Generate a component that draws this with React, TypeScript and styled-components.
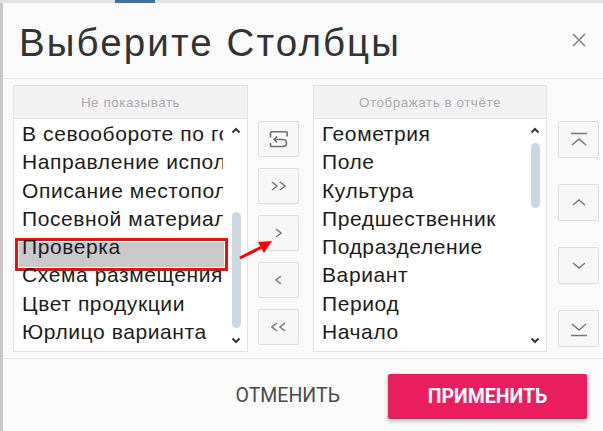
import styled, { createGlobalStyle } from 'styled-components';

const GlobalStyle = createGlobalStyle`
  html, body {
    margin: 0;
    padding: 0;
  }
  body {
    background: #dcdcdc;
    font-family: "Liberation Sans", Arial, sans-serif;
  }
`

const Page = styled.div`
  width: 603px;
  height: 431px;
  display: grid;
  grid-template-columns: 3px 1fr;
  grid-template-rows: 3px 1fr;
  position: relative;
  overflow: hidden;
`

const TopStrip = styled.div`
  grid-column: 1 / 3;
  background: #e2e2e2;
  display: flex;
  padding-left: 115px;
`

const PageTab = styled.div`
  width: 40px;
  background: #3a6ea5;
`

const LeftStrip = styled.div`
  background: #c8c8c8;
`

const Dialog = styled.div`
  background: #fafafa;
  display: flex;
  flex-direction: column;
`

const Header = styled.div`
  height: 76px;
  box-sizing: border-box;
  display: flex;
  align-items: center;
  justify-content: space-between;
  padding: 4px 17px 0 16px;
  border-bottom: 1px solid #e8e8e8;
`

const Title = styled.h1`
  margin: 0;
  font-weight: 400;
  font-size: 38.5px;
  letter-spacing: 2.1px;
  color: #333;
`

const CloseButton = styled.button`
  border: 0;
  background: none;
  padding: 0;
  width: 14px;
  height: 14px;
  display: flex;
  margin-top: -6px;
`

const Body = styled.div`
  height: 280px;
  box-sizing: border-box;
  display: flex;
  align-items: flex-start;
  padding: 6px 0 0 10px;
  border-bottom: 1px solid #e8e8e8;
`

const Panel = styled.div<{ $width: number; $gap: number }>`
  width: ${p => p.$width}px;
  height: 267px;
  box-sizing: border-box;
  margin-right: ${p => p.$gap}px;
  border: 1px solid #e2e2e2;
  background: #fff;
  display: flex;
  flex-direction: column;
`

const PanelHead = styled.div`
  height: 32px;
  flex: none;
  background: #f2f2f2;
  border-bottom: 1px solid #e2e2e2;
  display: flex;
  align-items: center;
  justify-content: center;
  font-size: 13.5px;
  letter-spacing: 0.5px;
  color: #ababab;
`

const PanelBody = styled.div`
  flex: 1;
  display: flex;
  min-height: 0;
`

const List = styled.div`
  flex: 1;
  min-width: 0;
  padding: 1px 2px 0 4px;
`

const Row = styled.div`
  position: relative;
  height: 28.3px;
  line-height: 28.3px;
  font-size: 21px;
  letter-spacing: 0.6px;
  color: #1c1c1c;
`

const Highlight = styled.div`
  position: absolute;
  left: -3px;
  right: -5px;
  top: 5px;
  bottom: -10px;
  background: #c9c9c9;
  border: 3px solid #f20d0d;
  box-shadow: inset 0 0 0 1px #fff;
`

const Label = styled.div`
  position: relative;
  padding-left: 4px;
  white-space: nowrap;
  overflow: hidden;
`

const Track = styled.div<{ $width: number }>`
  width: ${p => p.$width}px;
  flex: none;
  display: flex;
  flex-direction: column;
  align-items: center;
`

const TrackArrow = styled.div`
  height: 22px;
  flex: none;
  display: flex;
  align-items: center;
  justify-content: center;
`

const Rail = styled.div`
  flex: 1;
`

const Thumb = styled.div<{ $top: number; $height: number }>`
  width: 9px;
  margin-top: ${p => p.$top}px;
  height: ${p => p.$height}px;
  border-radius: 5px;
  background: #cdd7e1;
`

const ButtonColumn = styled.div<{ $gap: number; $spread?: boolean }>`
  width: 41px;
  height: 267px;
  box-sizing: border-box;
  margin-right: ${p => p.$gap}px;
  padding: 36px 0 5px;
  display: flex;
  flex-direction: column;
  gap: 11px;
  justify-content: ${p => (p.$spread ? 'space-between' : 'flex-start')};
`

const MoveButton = styled.button<{ $height: number }>`
  width: 41px;
  height: ${p => p.$height}px;
  padding: 0;
  border: 1px solid #dddddd;
  border-radius: 2px;
  background: #f7f7f7;
  display: flex;
  align-items: center;
  justify-content: center;
`

const Footer = styled.div`
  flex: 1;
  display: flex;
  align-items: center;
  justify-content: flex-end;
  padding: 0 16px 0 0;
`

const CancelButton = styled.button`
  border: 0;
  background: none;
  padding: 10px 14px;
  margin-right: 34px;
  font-family: Roboto, "Liberation Sans", sans-serif;
  font-size: 19.5px;
  color: #4a4a4a;
  text-transform: uppercase;
`

const ApplyButton = styled.button`
  width: 199px;
  height: 45px;
  border: 0;
  border-radius: 2px;
  background: #ea1d5f;
  color: #fff;
  font-family: Roboto, "Liberation Sans", sans-serif;
  font-weight: 700;
  font-size: 19.5px;
  text-transform: uppercase;
  box-shadow: 0 2px 4px rgba(0, 0, 0, 0.3);
  margin-top: 2px;
`

const Annotation = styled.svg`
  position: absolute;
  left: 236px;
  top: 234px;
`

const hidden = ['В севообороте по годам', 'Направление использования', 'Описание местоположения', 'Посевной материал', 'Проверка', 'Схема размещения', 'Цвет продукции', 'Юрлицо варианта']
const shown = ['Геометрия', 'Поле', 'Культура', 'Предшественник', 'Подразделение', 'Вариант', 'Период', 'Начало']

function ScrollChevron({ up }: { up?: boolean }) {
  return (
    <svg width="10" height="7" viewBox="0 0 10 7">
      <polyline points={up ? '1.5,5.5 5,2 8.5,5.5' : '1.5,1.5 5,5 8.5,1.5'} fill="none" stroke="#333" strokeWidth="2" />
    </svg>
  )
}

function Chevrons({ dir, count }: { dir: 'left' | 'right' | 'up' | 'down'; count: number }) {
  const one = (x: number) => {
    if (dir === 'right') return `${x},1 ${x + 5},5 ${x},9`
    if (dir === 'left') return `${x + 5},1 ${x},5 ${x + 5},9`
    if (dir === 'up') return `1,${x + 5} 7,${x} 13,${x + 5}`
    return `1,${x} 7,${x + 5} 13,${x}`
  }
  const horizontal = dir === 'left' || dir === 'right'
  const w = horizontal ? 6 + (count - 1) * 8 + 2 : 14
  const h = horizontal ? 10 : 7
  return (
    <svg width={w} height={h} viewBox={`0 0 ${w} ${h}`}>
      {Array.from({ length: count }, (_, i) => (
        <polyline key={i} points={one(horizontal ? 1 + i * 8 : 1)} fill="none" stroke="#777" strokeWidth="1.5" />
      ))}
    </svg>
  )
}

function EdgeIcon({ top }: { top?: boolean }) {
  return (
    <svg width="18" height="16" viewBox="0 0 18 16">
      {top ? (
        <>
          <line x1="1" y1="1.5" x2="17" y2="1.5" stroke="#777" strokeWidth="1.5" />
          <polyline points="2,13 9,7 16,13" fill="none" stroke="#777" strokeWidth="1.5" />
        </>
      ) : (
        <>
          <polyline points="2,3 9,9 16,3" fill="none" stroke="#777" strokeWidth="1.5" />
          <line x1="1" y1="14.5" x2="17" y2="14.5" stroke="#777" strokeWidth="1.5" />
        </>
      )}
    </svg>
  )
}

function ResetIcon() {
  return (
    <svg width="24" height="19" viewBox="0 0 24 19" fill="none" stroke="#6f6f6f" strokeWidth="1.6">
      <path d="M3.5 7.5 V3 Q3.5 1.8 4.7 1.8 H19 Q20.2 1.8 20.2 3 V6.5" />
      <path d="M7 9.5 H15.5 Q19.5 9.5 19.5 13 Q19.5 16.5 15.5 16.5 H4.7 Q3.5 16.5 3.5 15.3 V13" />
      <polyline points="10,6.5 7,9.5 10,12.5" />
    </svg>
  )
}

export default function App() {
  return (
    <>
      <GlobalStyle />
      <Page>
        <TopStrip>
          <PageTab />
        </TopStrip>
        <LeftStrip />
        <Dialog>
          <Header>
            <Title>Выберите Столбцы</Title>
            <CloseButton aria-label="close">
              <svg width="14" height="14" viewBox="0 0 14 14">
                <path d="M1 1 L13 13 M13 1 L1 13" stroke="#808080" strokeWidth="1.5" />
              </svg>
            </CloseButton>
          </Header>
          <Body>
            <Panel $width={235} $gap={10}>
              <PanelHead>Не показывать</PanelHead>
              <PanelBody>
                <List>
                  {hidden.map(name => (
                    <Row key={name}>
                      {name === 'Проверка' && <Highlight />}
                      <Label>{name}</Label>
                    </Row>
                  ))}
                </List>
                <Track $width={22}>
                  <TrackArrow><ScrollChevron up /></TrackArrow>
                  <Rail><Thumb $top={71} $height={116} /></Rail>
                  <TrackArrow><ScrollChevron /></TrackArrow>
                </Track>
              </PanelBody>
            </Panel>
            <ButtonColumn $gap={14}>
              <MoveButton $height={36}><ResetIcon /></MoveButton>
              <MoveButton $height={36}><Chevrons dir="right" count={2} /></MoveButton>
              <MoveButton $height={36}><Chevrons dir="right" count={1} /></MoveButton>
              <MoveButton $height={36}><Chevrons dir="left" count={1} /></MoveButton>
              <MoveButton $height={36}><Chevrons dir="left" count={2} /></MoveButton>
            </ButtonColumn>
            <Panel $width={234} $gap={11}>
              <PanelHead>Отображать в отчёте</PanelHead>
              <PanelBody>
                <List>
                  {shown.map(name => (
                    <Row key={name}><Label>{name}</Label></Row>
                  ))}
                </List>
                <Track $width={22}>
                  <TrackArrow><ScrollChevron up /></TrackArrow>
                  <Rail><Thumb $top={2} $height={65} /></Rail>
                  <TrackArrow><ScrollChevron /></TrackArrow>
                </Track>
              </PanelBody>
            </Panel>
            <ButtonColumn $gap={0} $spread>
              <MoveButton $height={37}><EdgeIcon top /></MoveButton>
              <MoveButton $height={37}><Chevrons dir="up" count={1} /></MoveButton>
              <MoveButton $height={37}><Chevrons dir="down" count={1} /></MoveButton>
              <MoveButton $height={37}><EdgeIcon /></MoveButton>
            </ButtonColumn>
          </Body>
          <Footer>
            <CancelButton>Отменить</CancelButton>
            <ApplyButton>Применить</ApplyButton>
          </Footer>
        </Dialog>
        <Annotation width="40" height="28" viewBox="0 0 40 28">
          <line x1="4" y1="24" x2="28" y2="12" stroke="#f00" strokeWidth="3" />
          <polygon points="36,7 22,8 28,19" fill="#f00" />
        </Annotation>
      </Page>
    </>
  )
}
